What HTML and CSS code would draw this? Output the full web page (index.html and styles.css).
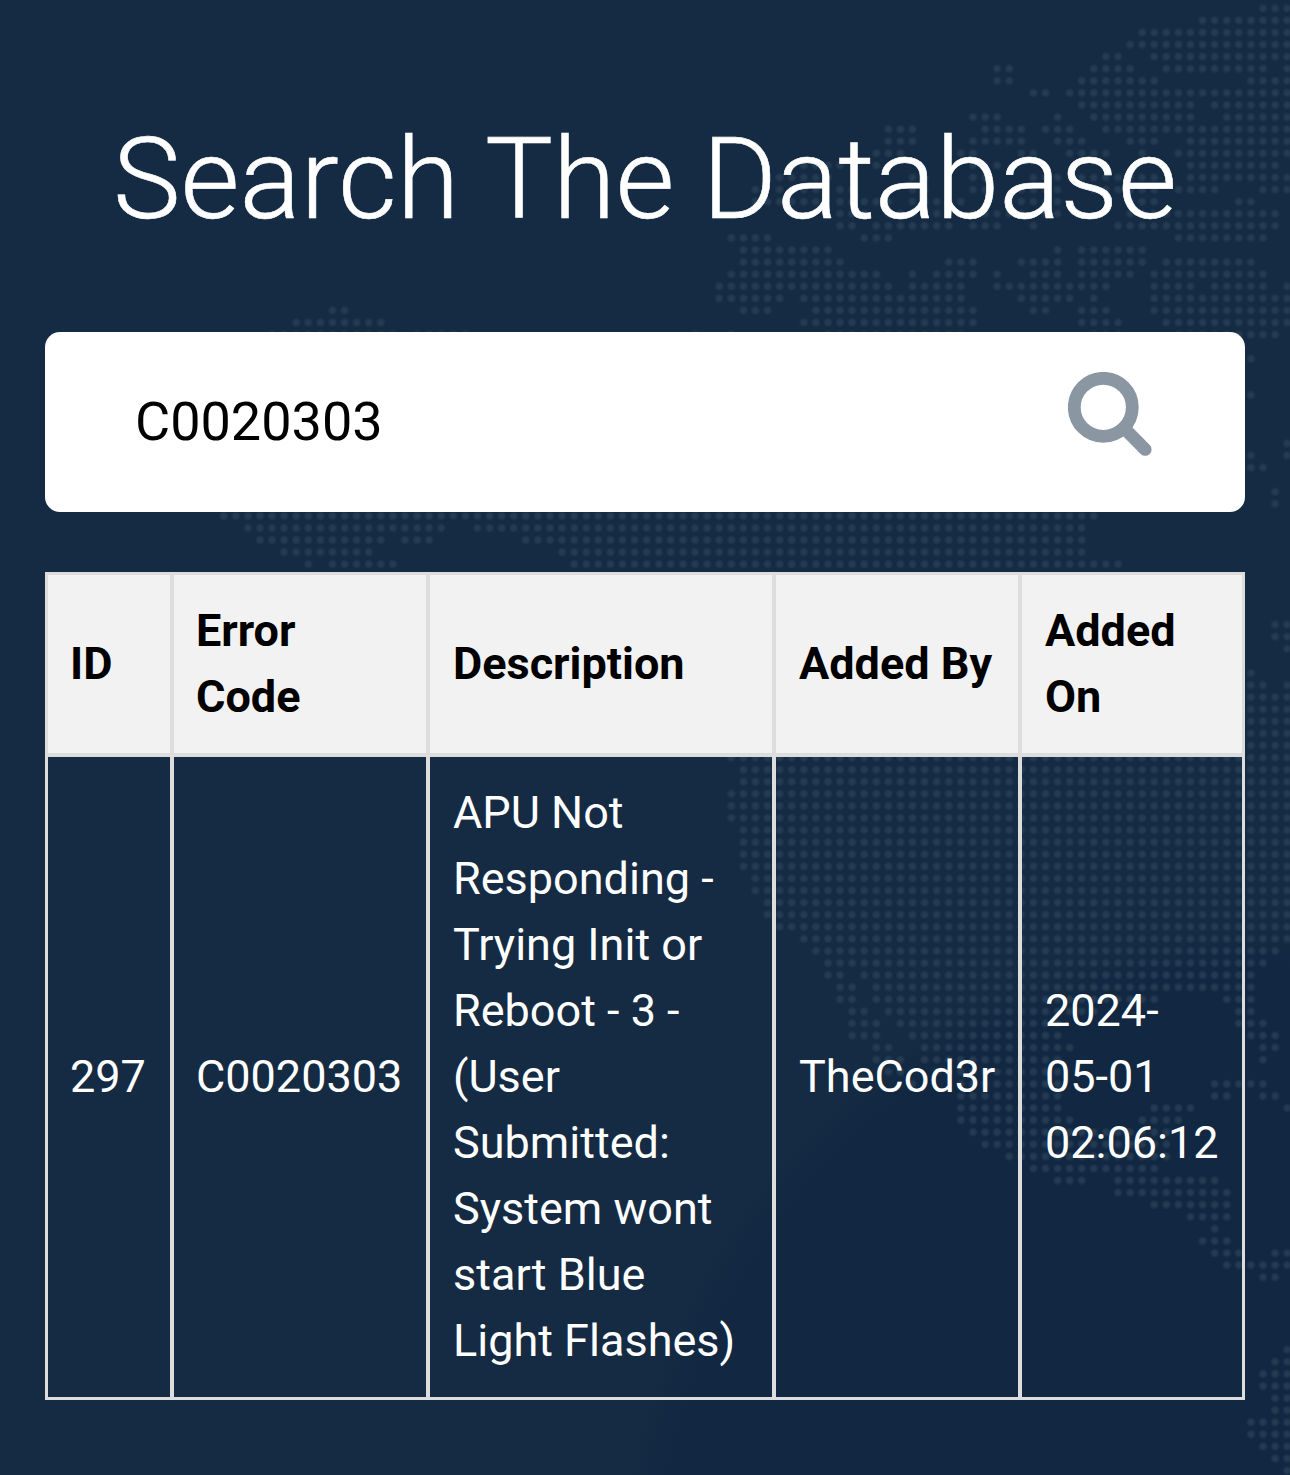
FILE: index.html
```
<!DOCTYPE html>
<html lang="en">
<head>
    <meta charset="UTF-8">
    <meta name="viewport" content="width=device-width, initial-scale=1.0">
    <title>Search The Database</title>
    <link rel="stylesheet" href="styles.css">
</head>
<body>
    <svg class="world-map" id="worldMap" aria-hidden="true">
        <defs>
            <radialGradient id="dotFill">
                <stop offset="0" stop-color="#263e54"/>
                <stop offset="0.5" stop-color="#263e54" stop-opacity="0.75"/>
                <stop offset="1" stop-color="#263e54" stop-opacity="0"/>
            </radialGradient>
        </defs>
    </svg>
    <main class="container">
        <h1>Search The Database</h1>
        <form class="search-box">
            <input type="text" name="search" value="C0020303" aria-label="Error code">
            <button type="submit" aria-label="Search">
                <svg class="search-icon" viewBox="0 0 84 84">
                    <circle cx="35.3" cy="35.3" r="29"/>
                    <path d="M56 56L77.2 77.4"/>
                </svg>
            </button>
        </form>
        <table>
            <colgroup>
                <col class="col-id">
                <col class="col-code">
                <col class="col-desc">
                <col class="col-by">
                <col class="col-on">
            </colgroup>
            <thead>
                <tr>
                    <th>ID</th>
                    <th>Error Code</th>
                    <th>Description</th>
                    <th>Added By</th>
                    <th>Added On</th>
                </tr>
            </thead>
            <tbody>
                <tr>
                    <td>297</td>
                    <td>C0020303</td>
                    <td>APU Not Responding - Trying Init or Reboot - 3 - (User Submitted: System wont start Blue Light Flashes)</td>
                    <td>TheCod3r</td>
                    <td>2024-05-01 02:06:12</td>
                </tr>
            </tbody>
        </table>
    </main>
    <script src="map.js"></script>
</body>
</html>
```
FILE: styles.css
```
* {
    box-sizing: border-box;
}
body {
    margin: 0;
    min-height: 1475px;
    position: relative;
    overflow: hidden;
    font-family: Roboto, sans-serif;
    color: #fff;
    background: radial-gradient(circle at 1290px 1600px, #122842 0, #122842 635px, #152b43 675px);
}
.world-map {
    position: absolute;
    top: 0;
    left: 0;
    width: 1290px;
    height: 1475px;
}
.container {
    position: relative;
    padding: 112px 45px 75px;
}
h1 {
    margin: 0 0 85px;
    font-size: 114px;
    font-weight: 300;
    line-height: 135px;
    text-align: center;
    white-space: nowrap;
    -webkit-text-stroke: 0.6px #fff;
}
.search-box {
    display: flex;
    height: 180px;
    margin-bottom: 60px;
    background: #fff;
    border-radius: 15px;
}
.search-box input {
    flex: 1;
    min-width: 0;
    padding: 0 0 2px 90px;
    border: none;
    outline: none;
    background: none;
    color: #000;
    font: 54px Roboto, sans-serif;
}
.search-box button {
    display: flex;
    padding: 40px 93px 0 0;
    border: none;
    background: none;
    cursor: pointer;
}
.search-icon {
    width: 84px;
    height: 84px;
    fill: none;
    stroke: #8a96a1;
    stroke-width: 12.8;
    stroke-linecap: round;
}
table {
    width: 100%;
    table-layout: fixed;
    border-collapse: separate;
    border-spacing: 0;
    font-size: 45px;
    line-height: 66px;
}
.col-id { width: 125px; }
.col-code { width: 256px; }
.col-desc { width: 346px; }
.col-by { width: 246px; }
.col-on { width: 227px; }
th, td {
    padding: 0 22px 0 23px;
    border: 0 solid #ddd;
    border-left-width: 4px;
    text-align: left;
    vertical-align: middle;
}
th:nth-child(-n+2), td:nth-child(-n+2) {
    padding-left: 22px;
}
th {
    height: 181px;
    border-top-width: 3px;
    background: #f2f2f2;
    color: #000;
    font-weight: 700;
}
td {
    height: 647px;
    border-top-width: 4px;
    border-bottom-width: 3px;
}
th:first-child, td:first-child {
    border-left-width: 3px;
}
th:last-child, td:last-child {
    border-right-width: 3px;
}
```
FILE: map.js
```
// Dotted world map: row number -> runs of dots [first column, last column]
const rows = {
    0: [[86, 88]],
    1: [[81, 88]],
    2: [[76, 88]],
    3: [[75, 88]],
    4: [[73, 74], [77, 88]],
    5: [[64, 65], [72, 75], [78, 86], [88, 88]],
    6: [[64, 65], [71, 77], [85, 88]],
    7: [[67, 68], [70, 88]],
    8: [[71, 80], [82, 88]],
    9: [[62, 64], [69, 69], [72, 80], [83, 88]],
    10: [[55, 57], [63, 66], [68, 70], [73, 88]],
    11: [[55, 57], [62, 66], [69, 71], [75, 77], [80, 88]],
    12: [[54, 56], [61, 62], [66, 67], [70, 73], [76, 76], [79, 88]],
    13: [[48, 51], [54, 54], [62, 64], [80, 87]],
    14: [[46, 50], [57, 58], [62, 63], [67, 69], [71, 77], [80, 88]],
    15: [[44, 44], [46, 49], [51, 52], [57, 58], [62, 63], [66, 69], [72, 77], [79, 82], [86, 88]],
    16: [[44, 49], [51, 55], [57, 61], [65, 69], [75, 77], [84, 85]],
    17: [[51, 53], [55, 60], [62, 66], [68, 69], [75, 87]],
    18: [[51, 52], [54, 60], [62, 64], [67, 67], [74, 87]],
    19: [[42, 45], [53, 55], [79, 86]],
    20: [[43, 50], [69, 69], [71, 76]],
    21: [[43, 51], [60, 62], [66, 69], [71, 76], [78, 85]],
    22: [[42, 54], [57, 57], [59, 62], [64, 64], [67, 69], [71, 75], [77, 86]],
    23: [[41, 55], [57, 61], [64, 73], [77, 80], [82, 86], [88, 88]],
    24: [[41, 46], [48, 61], [66, 70], [72, 72], [77, 88]],
    25: [[9, 10], [43, 45], [49, 62], [67, 68], [71, 73], [77, 88]],
    26: [[6, 13], [48, 62], [71, 74], [78, 88]],
    27: [[4, 14], [16, 20], [39, 39], [42, 42], [50, 61], [72, 74], [79, 87]],
    29: [[85, 85]],
    32: [[85, 85]],
    36: [[88, 88]],
    37: [[85, 85], [88, 88]],
    38: [[85, 86]],
    40: [[87, 87]],
    41: [[87, 87]],
    42: [[0, 72]],
    43: [[2, 18], [21, 71]],
    44: [[3, 13], [15, 17], [25, 71]],
    45: [[5, 12], [28, 71]],
    46: [[7, 7], [9, 14], [29, 74]],
    51: [[87, 88]],
    52: [[87, 88]],
    53: [[88, 88]],
    55: [[85, 85]],
    56: [[85, 86], [88, 88]],
    57: [[85, 88]],
    58: [[85, 88]],
    59: [[85, 88]],
    60: [[85, 88]],
    61: [[85, 88]],
    62: [[42, 88]],
    63: [[43, 88]],
    64: [[43, 88]],
    65: [[42, 88]],
    66: [[42, 88]],
    67: [[42, 88]],
    68: [[43, 88]],
    69: [[43, 88]],
    70: [[43, 88]],
    71: [[43, 88]],
    72: [[44, 88]],
    73: [[44, 88]],
    74: [[45, 88]],
    75: [[45, 88]],
    76: [[46, 88]],
    77: [[48, 88]],
    78: [[49, 87]],
    79: [[50, 86]],
    80: [[50, 51], [53, 85]],
    81: [[51, 52], [54, 85]],
    82: [[51, 52], [54, 77], [83, 85]],
    83: [[52, 53], [55, 72], [84, 85]],
    84: [[52, 54], [56, 69], [84, 86]],
    85: [[52, 54], [57, 69], [85, 87]],
    86: [[54, 55], [58, 70], [86, 87]],
    87: [[54, 56], [58, 69], [86, 86]],
    88: [[55, 56], [59, 69]],
    89: [[57, 57], [61, 69], [82, 86]],
    90: [[61, 69], [82, 83], [86, 87]],
    91: [[61, 69], [77, 80], [88, 88]],
    92: [[61, 70], [76, 79]],
    93: [[62, 78]],
    94: [[63, 78]],
    95: [[65, 78]],
    96: [[67, 77]],
    97: [[69, 71], [74, 82]],
    98: [[74, 83]],
    99: [[77, 83]],
    100: [[80, 83]],
    101: [[82, 82]],
    102: [[81, 83]],
    103: [[82, 84], [87, 88]],
    104: [[83, 88]],
    105: [[86, 87]],
    111: [[88, 88]],
    112: [[87, 88]],
    113: [[86, 88]],
    114: [[86, 88]],
    115: [[87, 88]],
    116: [[87, 88]],
    117: [[85, 88]],
    118: [[85, 88]],
    119: [[86, 88]],
    120: [[87, 88]],
    121: [[88, 88]]
};

const step = 12.085;
const map = document.getElementById('worldMap');

for (const row in rows) {
    for (const [from, to] of rows[row]) {
        for (let col = from; col <= to; col++) {
            const dot = document.createElementNS('http://www.w3.org/2000/svg', 'circle');
            dot.setAttribute('cx', (223.7 + col * step).toFixed(1));
            dot.setAttribute('cy', (8.3 + row * step).toFixed(1));
            dot.setAttribute('r', 5);
            dot.setAttribute('fill', 'url(#dotFill)');
            map.appendChild(dot);
        }
    }
}
```
